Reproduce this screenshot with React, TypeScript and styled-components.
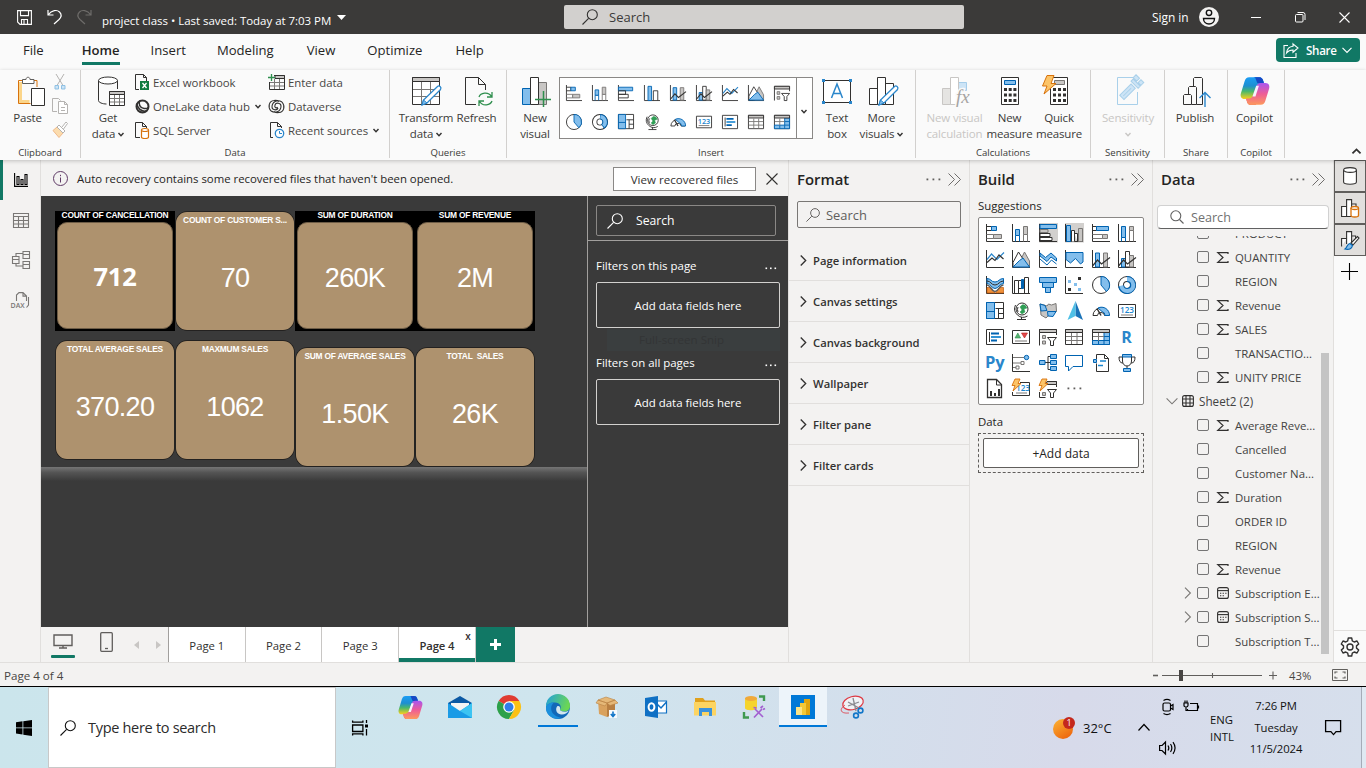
import React from "react";
import styled, { createGlobalStyle, css } from "styled-components";

const INK = "#323130";
const BLUE = "#0063b1";
const SKY = "#83beec";
const GRAY = "#c8c6c4";
const MID = "#797775";
const TEAL = "#117865";
const TAN = "#ae926e";

const Global = createGlobalStyle`
  html, body { margin: 0; padding: 0; width: 1366px; height: 768px; overflow: hidden; }
  body { font-family: "Open Sans", "Noto Sans", sans-serif; font-size: 11.3px; color: #252423; }
  * { box-sizing: border-box; }
  svg { display: block; flex: none; overflow: visible; }
`;

const Screen = styled.div`
  width: 1366px;
  height: 768px;
  display: flex;
  flex-direction: column;
  overflow: hidden;
  white-space: nowrap;
`;

/* ---------- Icon helpers ---------- */

type SvgProps = { w: number; h?: number; box?: string; stroke?: string; sw?: number; children: React.ReactNode };
const Svg = ({ w, h = w, box, stroke = INK, sw = 1, children }: SvgProps) => (
  <svg width={w} height={h} viewBox={box ?? `0 0 ${w} ${h}`} fill="none" stroke={stroke} strokeWidth={sw}>
    {children}
  </svg>
);

const Magnifier = ({ size = 16, color = INK }: { size?: number; color?: string }) => (
  <Svg w={size} box="0 0 16 16" stroke={color} sw={1.1}>
    <circle cx="10.3" cy="5.7" r="5" />
    <path d="M6.6 9.4 .5 15.5" />
  </Svg>
);

const Chevron = ({ dir, size = 10, color = INK, sw = 1.2 }: { dir: "down" | "up" | "right"; size?: number; color?: string; sw?: number }) => (
  <Svg w={size} box="0 0 10 10" stroke={color} sw={sw}>
    <path d={dir === "down" ? "M.5 2.8 5 7.3l4.5-4.5" : dir === "up" ? "M.5 7.2 5 2.7l4.5 4.5" : "M2.5.5 7 5 2.5 9.5"} />
  </Svg>
);

const Caret = ({ color = INK }: { color?: string }) => (
  <Svg w={6} h={5} stroke={color} sw={1.4}>
    <path d="M.5 1 3 3.7 5.5 1" />
  </Svg>
);

const DoubleChevron = () => (
  <Svg w={13} h={13} stroke="#605e5c" sw={0.9}>
    <path d="M.5.5 6.5 6.5.5 12.5M6.5.5 12.5 6.5 6.5 12.5" />
  </Svg>
);

const Dots = ({ color = "#605e5c", gap = 6, size = 1.8 }: { color?: string; gap?: number; size?: number }) => (
  <Svg w={gap * 2 + 3} h={3} stroke="none">
    {[0, 1, 2].map((i) => (
      <rect key={i} x={i * gap + 0.5} y={0.5} width={size} height={size} fill={color} />
    ))}
  </Svg>
);

const axis = <path d="M.5 0v17.5H18" />;
const bolt = <path d="M3-1h5L6 3.5h3L1 11l2-5.5H0z" fill="#fcc468" stroke="#d8720c" strokeWidth=".9" />;

const visuals: Record<string, React.ReactNode> = {
  stackedBar: (<>{axis}<path d="M.5 2.5h5v4h-5" /><path d="M5.5 2.5h5v4h-5z" fill={SKY} stroke={BLUE} /><path d="M.5 10.5h7v4h-7" stroke={MID} /><path d="M7.5 10.5h8v4h-8z" fill={GRAY} stroke={MID} /></>),
  stackedCol: (<>{axis}<path d="M3.5 17.5v-6h4v6" stroke={BLUE} /><path d="M3.5 5.5h4v6h-4z" fill={SKY} stroke={BLUE} /><path d="M11.5 17.5v-7h4v7" stroke={MID} /><path d="M11.5 2.5h4v8h-4z" fill={GRAY} stroke={MID} /></>),
  bar: (<>{axis}<path d="M.5 2.5h16v4H.5z" fill={SKY} stroke={BLUE} /><path d="M.5 6.5h8v4h-8M.5 10.5h11v4H.5" /></>),
  barSel: (<><path d="M0-1h19v19.5H0z" fill="#d2d0ce" stroke="none" />{axis}<path d="M1 .5h16.5v4H1z" fill={SKY} stroke={BLUE} /><path d="M1 5.5h8v3H1z" fill={GRAY} stroke={MID} /><path d="M1 9.5h10v3H1zM1 13.5h12v3H1z" fill="#fff" /></>),
  col: (<>{axis}<path d="M4.5 17.5v-16h4v16z" fill={SKY} stroke={BLUE} /><path d="M10.5 17.5v-11h5v11" /></>),
  colSel: (<><path d="M0-1h19v19.5H0z" fill="#d2d0ce" stroke="none" />{axis}<path d="M1.5 17.5V1.5h4v16z" fill={SKY} stroke={BLUE} /><path d="M6.5 17.5V6.5h3v11M9.5 9.5h3v8" fill="#fff" /><path d="M13.5 17.5v-13h4v13z" fill={GRAY} stroke={MID} /></>),
  fullBar: (<>{axis}<path d="M.5 2.5h4v4h-4" /><path d="M4.5 2.5h12v4h-12z" fill={SKY} stroke={BLUE} /><path d="M.5 10.5h10v4H.5" stroke={MID} /><path d="M10.5 10.5h5v4h-5z" fill={GRAY} stroke={MID} /></>),
  fullCol: (<>{axis}<path d="M3.5 17.5v-4h4v4" stroke={BLUE} /><path d="M3.5 2.5h4v11h-4z" fill={SKY} stroke={BLUE} /><path d="M11.5 17.5v-11h4v11" stroke={MID} /><path d="M11.5 2.5h4v4h-4z" fill={GRAY} stroke={MID} /></>),
  line: (<>{axis}<path d="M1 9.5 5.5 4 11 9.5l7-7" stroke="#2a86cb" strokeWidth="1.2" /><path d="M1 12.5 6 8l3 2.5L13 5l4.5 4" strokeWidth="1.2" /></>),
  area: (<>{axis}<path d="m8 11 4.5-9 5 9v6H8z" fill={GRAY} stroke={MID} /><path d="M1 12.5 6.5 2 11 9l-5 8H1z" fill="#fff" /><path d="m1 17 6.5-6.5L11 8l6.5 9z" fill={SKY} stroke={BLUE} /></>),
  stackArea: (<>{axis}<path d="m1 3 5.5 4.5L12 3l5.5 5v3L12 7l-4 4.5L1 6z" fill={SKY} stroke={BLUE} /><path d="m1 9 7 6 4.5-5 5 4" stroke={BLUE} /></>),
  fullArea: (<>{axis}<path d="M1 2.5h17V12l-2.5 2-5-5.5L5.5 13 1 9.5z" fill={SKY} stroke={BLUE} /></>),
  combo1: (<>{axis}<path d="M3.5 17v-14h4v14z" fill={SKY} stroke={BLUE} /><path d="M11.5 17v-14h4v14z" fill={GRAY} stroke={MID} /><path d="m.5 16 5-6 4 4L18 7.5" strokeWidth="1.2" /></>),
  combo2: (<>{axis}<path d="M3.5 17V8.5h4V17z" fill={SKY} stroke={BLUE} /><path d="M7.5 17V1.5h4V17z" fill="#fff" /><path d="M11.5 17V5.5h4V17z" fill={GRAY} stroke={MID} /><path d="m.5 16 5-6 4 4L18 7.5" strokeWidth="1.2" /></>),
  ribbon: (<>{axis}<path d="M1 11.5h4l4 5.5H1zM17.5 11.5h-4l-4 5.5h8z" fill="#f0913a" stroke="#c05a0b" strokeWidth=".7" /><path d="M1 9c4 0 4 6.5 8 6.5S13 9 17.5 9" strokeWidth="1.5" stroke="#605e5c" /><path d="M1 2.5c4 0 4 3.5 8 3.5s4-3.5 8.5-3.5v5c-4 0-5 5-8.5 5s-4-5-8-5z" fill={SKY} stroke={BLUE} /><path d="M1 5c4 0 4 4 8 4s4-4 8.5-4" /></>),
  waterfall: (<>{axis}<path d="M2.5 17V4.5h4V17M12.5 17V1.5h4V17M6.5 4.5h3v8h-3" /><path d="M9.5 3.5h2v9h-2z" fill={BLUE} stroke={BLUE} /></>),
  funnel: (<g fill={SKY} stroke={BLUE}><path d="M.5 1.5h17v5H.5z" /><path d="M3.5 6.5h11v5h-11z" /><path d="M6.5 11.5h5v5h-5z" /></g>),
  scatter: (<>{axis}<g stroke="none"><path d="M13 1h3v3h-3zM3 12h3v3H3z" fill={INK} /><path d="M3 4h3v3H3zM9 7h3v3H9zM13 12h3v3h-3z" fill={SKY} /></g></>),
  pie: (<><circle cx="9" cy="9" r="8.5" fill="#fff" /><path d="M9 9V.5a8.500 8.500 0 0 1 5.5 15z" fill={SKY} stroke={BLUE} /></>),
  donut: (<><circle cx="9" cy="9" r="6" stroke={INK} strokeWidth="6" /><circle cx="9" cy="9" r="6" stroke="#fff" strokeWidth="4" /><path d="M9 3A6 6 0 1 1 3.1 10" stroke={BLUE} strokeWidth="6" /><path d="M9 3A6 6 0 1 1 3.3 9.8" stroke={SKY} strokeWidth="4" /></>),
  donut2: (<><circle cx="9" cy="9" r="6" stroke={INK} strokeWidth="6" /><circle cx="9" cy="9" r="6" stroke="#fff" strokeWidth="4" /><path d="M9 3a6 6 0 0 1 3 11" stroke={BLUE} strokeWidth="6" /><path d="M9.5 3a6 6 0 0 1 3.2 10.5" stroke={SKY} strokeWidth="4" /></>),
  tree: (<><path d="M.5.5h17v16H.5z" fill="#fff" /><path d="M9.5 6.5h8M12.5 6.5v10M12.5 11.5h5" /><path d="M.5.5h8v16h-8z" fill={SKY} stroke={BLUE} /><path d="M.5 9.5h8" stroke={BLUE} /></>),
  globe: (<><circle cx="10" cy="7" r="6" /><path d="M10 3c3-1 4 1 5 3l-3 1 1 3-3 2-2-2 2-2-2-3z" fill="#2f9e55" stroke="#2f9e55" strokeWidth=".5" /><path d="M6 5a6 6 0 0 0 0 5M3.5 3A8.500 8.500 0 0 0 15.5 14M9.5 15v2.5M5 17.5h9" /></>),
  filled: (<><path d="m1 2 4 1 3 1 1.5-2 3 1L17 1.5l.5 8L14 13l-3-1-4 4-5-3z" fill={GRAY} stroke={MID} /><path d="m1 2 5 1.5 2 5-6 .5z" fill={SKY} stroke={BLUE} /><path d="M8.5 9.5H17l-3 5-5-.5z" fill={SKY} stroke={BLUE} /></>),
  azure: (<g stroke="none"><path d="M10.5-1 18 18l-7.5-4z" fill="#1a73b8" /><path d="M10.5-1 2.5 18l8-4z" fill="#4fc0e6" /></g>),
  gauge: (<><path d="M1 13.5a8 7.500 0 0 1 16 0h-4.500a3.500 3 0 0 0-7 0z" fill="#fff" /><path d="M6 6a8 8 0 0 1 11.5 7.5H13a4 4 0 0 0-3-4z" fill={SKY} stroke={BLUE} /><path d="m5 6.5 4 7" strokeWidth="1.5" /></>),
  card: (<><path d="M.5 2.5h17v13H.5z" fill="#fff" /><path d="M3 13h12" stroke={MID} /><text x="9" y="10.8" fontSize="8.2" fontWeight="600" textAnchor="middle" fill="#1a86d0" stroke="none">123</text></>),
  multi: (<><path d="M.5 1.5h17v15H.5z" fill="#fff" /><path d="M3.5 4v10" /><path d="M5 5.5h8M5 12.5h6" stroke={BLUE} strokeWidth="1.8" /><path d="M5 9h10" stroke="#1a86d0" strokeWidth="1.8" /></>),
  kpi: (<><path d="M.5 2.5h17v13H.5z" fill="#fff" /><path d="M3 13h12" stroke={MID} /><path d="m3 10 2.8-5L8.6 10z" fill="#57b371" stroke="#2f8f4e" strokeWidth=".6" /><path d="m9.5 5 3 5 3-5z" fill="#e04848" stroke="#b52020" strokeWidth=".6" /></>),
  slicer: (<><path d="M.5 17.5V1.5h17V7" /><path d="M.5 1.5h17v3H.5z" fill={GRAY} /><path d="M3.5 7.5h3v3h-3zM3.5 13h3v3h-3z" fill={GRAY} stroke={MID} /><path d="M8.5 9.5h9l-3 3.5v4.5h-3V13z" fill="#fff" /></>),
  table: (<><path d="M.5 1.5h17v15H.5z" fill="#fff" /><path d="M.5 1.5h17v3H.5z" fill={GRAY} /><path d="M1 8.5h16M1 12.5h16M6.5 5v11M12 5v11" stroke={MID} /></>),
  matrix: (<><path d="M.5 1.5h17v15H.5z" fill="#fff" /><path d="M12 4.5h5.5v12H.5v-4H12z" fill={SKY} stroke={BLUE} /><path d="M.5 1.5h17v3H.5z" fill={GRAY} /><path d="M1 8.5h11M6.5 5v8" stroke={MID} /><path d="M12 8.5h5.5M12 12.5h5.5M6.5 13v3.5M12 12.5v4" stroke={BLUE} /></>),
  r: (<text x="8.5" y="14.5" fontSize="16" fontWeight="700" textAnchor="middle" fill="#2a86cb" stroke="none" textLength="9">R</text>),
  py: (<text x="-1" y="14" fontSize="16.5" fontWeight="700" fill="#2a86cb" stroke="none">Py</text>),
  key: (<>{axis}<path d="M1 3.5h11M1 9h8M1 13.5h3" stroke={MID} /><circle cx="14.5" cy="3.5" r="2.2" fill={SKY} stroke={BLUE} /><path d="M9 7.5h3v3H9zM4 12h3v3H4z" fill="#fff" stroke={MID} /></>),
  decomp: (<><path d="M6 8.5h6M9 2.5v13M9 2.5h3M9 15.5h3" /><g fill={SKY} stroke={BLUE}><path d="M.5 6.5H6v4H.5zM11.5.5h6v4h-6zM11.5 6.5h6v4h-6zM11.5 12.5h6v4h-6z" /></g></>),
  qa: (<path d="M.5 1.5h17v11H8l-4.500 4.5v-4.500h-3z" fill="#fff" stroke={BLUE} />),
  narrative: (<><path d="M4.5 5V.5h8l4 4v13h-12V9.5M12.5.5v4h4" fill="#fff" /><path d="M1.5 5.5h3v3h-3z" fill={SKY} stroke={BLUE} /><path d="M8 7h6M6 11.5h5" stroke="#1a86d0" strokeWidth="1.5" /></>),
  trophy: (<><path d="M4.5 3H1c0 4 1 6 4 6M13.5 3H17c0 4-1 6-4 6M9 12v4" /><path d="M4.5 1v6c0 3 2 5 4.5 5s4.500-2 4.500-5V1z" fill="#fff" /><path d="M4.5.5h9v2.5h-9z" fill={SKY} stroke={BLUE} /><path d="M5.5 14.5h7v3h-7z" fill={SKY} stroke={BLUE} /></>),
  paginated: (<><path d="M1.5-.5h9l5 5v13h-14z" fill="#fff" strokeWidth="1.3" /><path d="M10.5 0v5h5" /><path d="M4 11h2v5H4zM8 13h2v3H8zM12 9h2v7h-2z" fill={INK} stroke="none" /></>),
  boltCard: (<><path d="M8 2.5h9.5v13H.5V12" fill="#fff" /><path d="M4 13h11" stroke={MID} /><text x="11" y="11" fontSize="8.2" fontWeight="600" textAnchor="middle" fill="#1a86d0" stroke="none">123</text>{bolt}</>),
  boltSlicer: (<><path d="M8 1.5h9.5V7M.5 12v5.5h6" /><path d="M8 1.5h9.5v3H7z" fill={GRAY} /><path d="M3.5 12.5h3v3h-3z" fill={GRAY} stroke={MID} /><path d="M8.5 9.5h9l-3 3.5v4.5h-3V13z" fill="#fff" />{bolt}</>),
};

const VisualIcon = ({ name, size = 18 }: { name: string; size?: number }) => (
  <Svg w={size} box="0 0 18 18">{visuals[name]}</Svg>
);

const Copilot = ({ size, id }: { size: number; id: string }) => {
  const half = "M8 1h8.500c2.200 0 3 1.200 3.500 3l.8 2.600h-2.600c-2 0-3 .9-3.600 2.900L12 16.500C11.300 18.800 10.200 20 8 20H4C1 20 0 17.500.8 15L4 4.500C4.700 2.200 5.800 1 8 1z";
  return (
    <Svg w={size} box="0 0 26 26" stroke="none">
      <defs>
        <linearGradient id={`${id}a`} x1="0" y1="0" x2="0" y2="1">
          <stop offset="0" stopColor="#1a9df5" />
          <stop offset=".4" stopColor="#1e8fd0" />
          <stop offset=".65" stopColor="#4bb86a" />
          <stop offset="1" stopColor="#fdd01a" />
        </linearGradient>
        <linearGradient id={`${id}b`} x1="0" y1="1" x2="0" y2="0">
          <stop offset="0" stopColor="#a855f0" />
          <stop offset=".5" stopColor="#ee5c96" />
          <stop offset="1" stopColor="#fd9a5c" />
        </linearGradient>
      </defs>
      <path d="M12 1h4.500c2.200 0 3 1.200 3.500 3l.8 3h-8z" fill="#1748c4" />
      <path d="M14 25H9.500c-2.200 0-3-1.200-3.500-3l-.8-3h8z" fill="#f0503c" />
      <path d={half} fill={`url(#${id}a)`} />
      <path d="M13 1h3.500c2.200 0 3 1.200 3.500 3l.8 2.600h-3L15 6z" fill="#1748c4" />
      <g transform="rotate(180 13 13)"><path d={half} fill={`url(#${id}b)`} /></g>
      <path d="m14 8.500-3.200 9.200h2.600L16.400 8.500z" fill="#f6f3fb" />
    </Svg>
  );
};

/* ---------- Title bar ---------- */

const TitleBar = styled.header`
  height: 34px;
  background: #3b3a39;
  color: #fff;
  display: flex;
  align-items: center;
  padding-left: 17px;
`;
const QuickActions = styled.div`
  width: 85px;
  display: flex;
  gap: 15px;
  align-items: center;
`;
const DocTitle = styled.div`
  width: 462px;
  display: flex;
  align-items: center;
  gap: 6px;
  font-size: 11.5px;
  letter-spacing: -0.03px;
  padding-top: 6px;
  svg { margin-top: -5px; }
`;
const GlobalSearch = styled.div`
  width: 400px;
  height: 24px;
  border-radius: 2px;
  background: #d2d0ce;
  color: #3b3a39;
  display: flex;
  align-items: center;
  gap: 11px;
  padding-left: 18px;
  font-size: 13px;
`;
const WindowControls = styled.div`
  margin-left: 188px;
  display: flex;
  align-items: center;
  font-size: 11.9px;
`;
const SignIn = styled.span` width: 47px; `;
const WinButtons = styled.div`
  display: flex;
  gap: 34px;
  margin-left: 32px;
`;

const Title = () => (
  <TitleBar>
    <QuickActions>
      <Svg w={15} stroke="#fff" sw={1.1}><path d="M.6.6h13.800v13.800H3L.6 12zM3.500.6v5h8v-5M4.500 14V9.500h6V14M7 10v4" /></Svg>
      <Svg w={15} h={16} stroke="#fff" sw={1.2}><path d="M1 1v5h5.500M1 6C5 1 10 .5 12.500 3S14.500 8 12 10.500L7 15" /></Svg>
      <Svg w={15} h={16} stroke="#6e6c6a" sw={1.2}><path d="M14 1v5H8.500M14 6C10 1 5 .5 2.500 3S.5 8 3 10.500L8 15" /></Svg>
    </QuickActions>
    <DocTitle>
      project class • Last saved: Today at 7:03 PM
      <Svg w={9} h={5} stroke="none"><path d="M0 0h9L4.500 5z" fill="#fff" /></Svg>
    </DocTitle>
    <GlobalSearch><Magnifier />Search</GlobalSearch>
    <WindowControls>
      <SignIn>Sign in</SignIn>
      <Svg w={20} stroke="#111" sw={1.4}>
        <circle cx="10" cy="10" r="10" fill="#f3f2f1" stroke="none" />
        <circle cx="10" cy="5.800" r="2.700" />
        <path d="M4.500 11.500h11c0 3.500-2.500 5.500-5.500 5.500s-5.500-2-5.500-5.500z" />
      </Svg>
      <WinButtons>
        <Svg w={10} h={11} stroke="#fff"><path d="M0 5.500h10" /></Svg>
        <Svg w={10} h={11} stroke="#fff"><rect x=".5" y="2.500" width="7.500" height="7.500" rx="1" /><path d="M2.500.5H8a2 2 0 0 1 2 2V8" /></Svg>
        <Svg w={11} h={11} stroke="#fff" sw={1.1}><path d="m.5.5 10 10M10.500.5l-10 10" /></Svg>
      </WinButtons>
    </WindowControls>
  </TitleBar>
);

/* ---------- Menu tabs ---------- */

const MenuBar = styled.nav`
  height: 36px;
  background: #fafafa;
  display: flex;
  padding: 0 6px 0 23px;
  font-size: 13.1px;
`;
const MenuTab = styled.span<{ $gap?: number; $active?: boolean }>`
  height: 31px;
  line-height: 32px;
  margin-right: ${(p) => p.$gap ?? 32}px;
  ${(p) => p.$active && css`font-weight: 600; box-shadow: inset 0 -3px 0 ${TEAL};`}
`;
const ShareButton = styled.button`
  margin: 4px 0 0 auto;
  width: 84px;
  height: 24px;
  border: 0;
  border-radius: 4px;
  background: ${TEAL};
  color: #fff;
  font: 600 11.6px "Open Sans", sans-serif;
  display: flex;
  align-items: center;
  padding: 0 7px;
  gap: 7px;
  span { width: 29px; letter-spacing: -0.3px; }
`;

const Menu = () => (
  <MenuBar>
    <MenuTab $gap={38}>File</MenuTab>
    <MenuTab $gap={31} $active>Home</MenuTab>
    <MenuTab $gap={31}>Insert</MenuTab>
    <MenuTab $gap={33}>Modeling</MenuTab>
    <MenuTab>View</MenuTab>
    <MenuTab $gap={33}>Optimize</MenuTab>
    <MenuTab>Help</MenuTab>
    <ShareButton>
      <Svg w={16} h={15} stroke="#fff" sw={1.1}><path d="M5 2.500H1v12h12V10M10 .8l5 4.200-5 4.200V7C7 7 5 8 3.500 10 4 6 6.500 3.500 10 3.200z" /></Svg>
      <span>Share</span>
      <Chevron dir="down" color="#fff" />
    </ShareButton>
  </MenuBar>
);

/* ---------- Ribbon ---------- */

const Ribbon = styled.section`
  height: 90px;
  background: #fafafa;
  display: flex;
  position: relative;
  z-index: 1;
  box-shadow: 0 1px 4px rgba(0, 0, 0, 0.22);
`;
const GroupBox = styled.div<{ $w: number }>`
  width: ${(p) => p.$w}px;
  height: 88px;
  border-right: 1px solid #d2d0ce;
  display: flex;
  flex-direction: column;
`;
const GroupBody = styled.div<{ $pad?: number }>`
  height: 76px;
  flex: none;
  display: flex;
  padding-left: ${(p) => p.$pad ?? 0}px;
`;
const GroupName = styled.div`
  flex: none;
  text-align: center;
  font-size: 9.6px;
  line-height: 14px;
  color: #3b3a39;
`;
const BigButton = styled.div<{ $w: number; $off?: boolean }>`
  width: ${(p) => p.$w}px;
  flex: none;
  display: flex;
  flex-direction: column;
  align-items: center;
  line-height: 16px;
  font-size: 11.5px;
  letter-spacing: -0.15px;
  color: ${(p) => (p.$off ? "#c8c6c4" : "#3b3a39")};
`;
const BigIcon = styled.div<{ $shift: number }>`
  height: 40px;
  padding-top: 6px;
  transform: translateX(${(p) => p.$shift}px);
`;
const Line = styled.span`
  display: flex;
  align-items: center;
  gap: 3px;
  min-height: 16px;
`;
const SmallStack = styled.div`
  display: flex;
  flex-direction: column;
  align-items: center;
  gap: 8px;
  padding-top: 4px;
`;
const CommandList = styled.div<{ $w: number }>`
  width: ${(p) => p.$w}px;
  display: flex;
  flex-direction: column;
`;
const Command = styled.div`
  height: 24px;
  flex: none;
  display: flex;
  align-items: center;
  gap: 3px;
  font-size: 11.4px;
  letter-spacing: -0.03px;
  color: #484644;
  svg:last-of-type:not(:first-child) { margin-left: 2px; }
`;
const Gallery = styled.div`
  margin-top: 7px;
  width: 254px;
  height: 62px;
  flex: none;
  border: 1px solid #8a8886;
  background: #fff;
  display: flex;
`;
const GalleryGrid = styled.div`
  width: 237px;
  border-right: 1px solid #8a8886;
  display: grid;
  grid-template-columns: repeat(9, 26px);
  grid-template-rows: 29px 29px;
  align-items: center;
  padding-left: 6px;
`;
const GalleryMore = styled.div`
  flex: 1;
  display: flex;
  align-items: center;
  justify-content: center;
  padding: 6px 2px 0 0;
`;
const CollapseRibbon = styled.div`
  margin: 77px 0 0 67px;
`;

type GroupProps = { w: number; name: string; pad?: number; children: React.ReactNode };
const Group = ({ w, name, pad, children }: GroupProps) => (
  <GroupBox $w={w}>
    <GroupBody $pad={pad}>{children}</GroupBody>
    <GroupName>{name}</GroupName>
  </GroupBox>
);

type BigProps = { w: number; icon: React.ReactNode; lines: string[]; caret?: boolean; off?: boolean; shift?: number };
const Big = ({ w, icon, lines, caret, off, shift = 0 }: BigProps) => (
  <BigButton $w={w} $off={off}>
    <BigIcon $shift={shift}>{icon}</BigIcon>
    {lines.map((text, i) => (
      <Line key={i}>
        {text}
        {caret && i === lines.length - 1 && <Caret color={off ? "#c8c6c4" : INK} />}
      </Line>
    ))}
  </BigButton>
);

const pencil = (
  <>
    <path d="M26.500 10.500c1.500-1.500 4.500.5 3 3L16 27l-5 2 1.500-5z" fill="#fff" stroke="#2a86cb" strokeWidth="1.3" />
    <path d="m12.500 24-1.500 5 5-2z" fill={SKY} stroke="#2a86cb" />
  </>
);
const bars3 = "M1.500 28.500v-16h8v16zM9.500 28.500V1.500h8v27zM17.500 28.500v-21h8v21z";

const icons = {
  paste: <Svg w={28} h={30}><path d="M8 4.500H1.500v23h12" stroke="#d8720c" /><path d="M3.500 6v19.500h9" stroke="#fbd58a" strokeWidth="3" /><path d="M20 11V4.500h-5" stroke="#d8720c" /><path d="M5.500 7.500v-4H9c0-3 4-3 4 0h4v4z" fill="#fff" stroke="#605e5c" /><path d="M14.500 12.500h13v17h-13z" fill="#fff" /></Svg>,
  cut: <Svg w={12} h={16} stroke="#b5b3b1"><path d="M2 0 9 11.500M10 0 3 11.500" /><path d="M1 11.500h3.500v3.500H1zM7.500 11.500H11v3.500H7.500z" fill="#cde4f6" stroke="#8fc1e4" /></Svg>,
  copy: <Svg w={16} h={16} stroke="#b5b3b1"><path d="M5 13.500H.5v-13h6l2 2" /><path d="M6.500 3.500h6l3 3v9h-9zM12.500 3.500v3h3M9 9.500h4M9 12.500h4" fill="#fff" /></Svg>,
  painter: <Svg w={16} h={16} stroke="#b5b3b1"><path d="m1 8.500 4-3.500 6 6-4 4.500z" fill="#fbdcae" stroke="#f0b98a" /><path d="m5 5 2-2 6 6-2 2zM10 5l4-5 1.500 1.500L11.500 7" fill="#fff" /></Svg>,
  getData: <Svg w={28} h={30}><path d="M1.500 4.500v20c0 2 4 3.500 8 3.500M20.500 4.500V13" /><ellipse cx="11" cy="4.500" rx="9.500" ry="3.500" fill="#fff" /><path d="M12.500 15.500h15v14h-15z" fill="#fff" /><path d="M12.500 15.500h15v3h-15z" fill={GRAY} /><path d="M13 22.500h14M13 26h14M17.500 19v10M22.500 19v10" stroke={MID} /></Svg>,
  transform: <Svg w={32} h={32}><path d="M1.500 1.500h27v27h-27z" fill="#fff" /><path d="M1.500 1.500h27v4h-27z" fill={GRAY} /><path d="M2 13.500h26M2 20.500h26M10.500 6v22M19.500 6v22" stroke={MID} />{pencil}</Svg>,
  refresh: <Svg w={32} h={32}><path d="M13 28.500H2.500v-27h13l7 7V14M15.500 1.500v7h7" /><path d="M16 21c1.500-4 9-6 12.500-.5M29 16v5h-5M29 25c-1.500 4-9 6-12.500.5M16 30v-5h5" stroke="#2f8f4e" strokeWidth="1.300" /></Svg>,
  newVisual: <Svg w={30} h={32}><path d="M1.500 12.500h8v16h-8z" fill={SKY} stroke={BLUE} /><path d="M17.500 6.500h8v22h-8z" fill={GRAY} stroke={MID} /><path d="M9.500 1.500h8v27h-8z" fill="#fff" /><path d="M14 23.500h16M22.500 15v16" stroke="#2f8f4e" strokeWidth="1.500" /></Svg>,
  textBox: <Svg w={32} h={32}><path d="M2.500 4.500h27v22h-27z" fill="#fff" /><path d="M1 3h3v3H1zM28 3h3v3h-3zM1 25h3v3H1zM28 25h3v3h-3z" fill="#2a86cb" stroke="none" /><path d="m10.500 22 5.500-14 5.500 14M12.500 17.500h7" stroke="#2a86cb" strokeWidth="1.500" /></Svg>,
  more: <Svg w={32} h={32}><path d={bars3} fill="#fff" />{pencil}</Svg>,
  calc: <Svg w={30} h={32} stroke="#c8c6c4"><path d="M1.500 12.500h8v16h-8z" fill="#e5e4e2" /><path d="M17.500 6.500h8v8h-8z" fill="#cde4f6" stroke="#a5cdea" /><path d="M9.500 1.500h8v27h-8z" fill="#fff" /><text x="15" y="27" fontSize="19" fontStyle="italic" fontFamily="Liberation Serif, serif" fill="#a6a4a2" stroke="#fafafa" strokeWidth="3" paintOrder="stroke">fx</text></Svg>,
  measure: <Svg w={22} h={32}><path d="M2.500 1.500h17v27h-17z" fill="#fff" /><path d="M5.500 4.500h11v4h-11z" fill={SKY} stroke={BLUE} /><path d="M5 13.500h13M5 19h13M5 24.500h13" strokeWidth="3" strokeDasharray="3 1.700" /></Svg>,
  quick: <Svg w={32} h={32}><path d="M9.500 1.500h17v27h-17z" fill="#fff" /><path d="M13.500 4.500h10v4h-10z" fill={GRAY} stroke={MID} /><path d="M12 13.500h13M12 19h13M12 24.500h13" strokeWidth="3" strokeDasharray="3 2" /><path d="M6-.5h7L10 7.500h5L3 18l3-8H1.500z" fill="#fcc468" stroke="#d8720c" /></Svg>,
  sensitivity: <Svg w={30} h={32} stroke="#a9d0ea"><path d="M18 1.500H2.500v27h20V16" /><g transform="rotate(-45 15 14)"><path d="M4 10.500h16v6H4z" fill="#cde4f6" /><path d="M6 13.500h11" /><path d="M22 8.500h3v10h-3zM26 7.500h4v5h-4zM26 14.500h4v4h-4z" fill="#cde4f6" /></g></Svg>,
  publish: <Svg w={30} h={32}><path d="M11.500 10V2.500l1-1h7l1 1v26h-6" fill="#fafafa" /><path d="M6.500 18v-6.500l1-1h6l1 1v17h-5" fill="#fafafa" /><path d="M1.500 28.500v-9l1-1h6l1 1v9z" fill="#fafafa" /><path d="M23 31V17M17.500 22 23 16.500l5.500 5.500" stroke="#2a86cb" strokeWidth="1.400" /></Svg>,
  excel: <Svg w={15} h={17}><path d="M4 15.500H.5V.5h8l3 3V7M8.500.5v3h3" /><path d="M5 7h9v9H5z" fill="#107c41" stroke="none" /><path d="m7.500 9 4 5M11.500 9l-4 5" stroke="#fff" strokeWidth="1.300" /></Svg>,
  oneLake: <Svg w={15} h={15} sw={2}><circle cx="7.500" cy="7.500" r="6" /><path d="M5 1.500C3 5 5 9 9 9.500c2 .3 4-.5 4.500-1.500M2 4.500c0 4 4 8.500 9 7.500" strokeWidth="1.500" /></Svg>,
  sql: <Svg w={15} h={17}><path d="M5 15.500H.5V.5h7l4 4V6M7.500.5v4h4" /><path d="M6.500 8v7c0 2 7 2 7 0V8" fill="#fff" stroke="#d8720c" strokeWidth="1.200" /><ellipse cx="10" cy="8" rx="3.500" ry="1.500" fill="#fff" stroke="#d8720c" strokeWidth="1.200" /></Svg>,
  enter: <Svg w={17} h={17}><path d="M6 1.500h10.500v14H1.500V8" /><path d="M7 1.500h9.500v3H7z" fill={GRAY} /><path d="M2 8.500h14M2 12h14M6.500 5v10M11.500 5v10" stroke={MID} /><path d="M0 3.500h7M3.500 0v7" stroke="#2f8f4e" strokeWidth="1.300" /></Svg>,
  dataverse: <Svg w={17} h={15} sw={1.1}><path d="M3 12C-.5 8 1 2 6 1.500c3-.5 5 1 5 1M14 3c3.500 4 2 10-3 10.500-3 .5-5-1-5-1M3 12c5 3 10 0 10-5 0-3-5-4-6-1s2 3.500 2.500 2M14 3C9 0 4 3 4 8c0 3 5 4 6 1" /></Svg>,
  recent: <Svg w={17} h={17}><path d="M5 15.500H2.500V.5h7l4 4V6M9.500.5v4h4" /><circle cx="11.500" cy="11.500" r="4.200" fill="#fff" stroke="#2a86cb" strokeWidth="1.300" /><path d="M11.500 9v2.500h2.500" stroke="#2a86cb" /></Svg>,
};

const galleryNames = [
  "stackedBar", "stackedCol", "bar", "col", "combo1", "combo2", "line", "area", "slicer",
  "pie", "donut2", "tree", "globe", "gauge", "card", "multi", "table", "matrix",
];

const RibbonArea = () => (
  <Ribbon>
    <Group w={81} name="Clipboard" pad={3}>
      <Big w={49} icon={icons.paste} lines={["Paste"]} shift={3} />
      <SmallStack>{icons.cut}{icons.copy}{icons.painter}</SmallStack>
    </Group>
    <Group w={309} name="Data">
      <Big w={54} icon={icons.getData} lines={["Get", "data"]} caret shift={3} />
      <CommandList $w={133}>
        <Command>{icons.excel}Excel workbook</Command>
        <Command>{icons.oneLake}OneLake data hub<Caret /></Command>
        <Command>{icons.sql}SQL Server</Command>
      </CommandList>
      <CommandList $w={120}>
        <Command>{icons.enter}Enter data</Command>
        <Command>{icons.dataverse}Dataverse</Command>
        <Command>{icons.recent}Recent sources<Caret /></Command>
      </CommandList>
    </Group>
    <Group w={117} name="Queries" pad={8}>
      <Big w={56} icon={icons.transform} lines={["Transform", "data"]} caret shift={1} />
      <Big w={45} icon={icons.refresh} lines={["Refresh"]} shift={2} />
    </Group>
    <Group w={409} name="Insert" pad={4}>
      <Big w={48} icon={icons.newVisual} lines={["New", "visual"]} shift={1} />
      <Gallery>
        <GalleryGrid>{galleryNames.map((n) => <VisualIcon key={n} name={n} size={16} />)}</GalleryGrid>
        <GalleryMore><Caret /></GalleryMore>
      </Gallery>
      <Big w={48} icon={icons.textBox} lines={["Text", "box"]} />
      <Big w={41} icon={icons.more} lines={["More", "visuals"]} caret shift={2} />
    </Group>
    <Group w={175} name="Calculations" pad={8}>
      <Big w={61} icon={icons.calc} lines={["New visual", "calculation"]} off shift={1} />
      <Big w={49} icon={icons.measure} lines={["New", "measure"]} />
      <Big w={50} icon={icons.quick} lines={["Quick", "measure"]} shift={-2} />
    </Group>
    <Group w={74} name="Sensitivity">
      <Big w={74} icon={icons.sensitivity} lines={["Sensitivity", ""]} caret off shift={2} />
    </Group>
    <Group w={63} name="Share">
      <Big w={60} icon={icons.publish} lines={["Publish"]} shift={2} />
    </Group>
    <Group w={57} name="Copilot">
      <Big w={53} icon={<Copilot size={30} id="rc" />} lines={["Copilot"]} />
    </Group>
    <CollapseRibbon><Chevron dir="up" size={9} sw={2} /></CollapseRibbon>
  </Ribbon>
);

/* ---------- Workspace ---------- */

const Workspace = styled.main`
  height: 502px;
  display: flex;
  background: #f3f2f1;
`;
const ViewRail = styled.aside`
  width: 41px;
  border-right: 1px solid #e1dfdd;
  display: flex;
  flex-direction: column;
`;
const RailItem = styled.div<{ $active?: boolean }>`
  height: 40px;
  display: flex;
  align-items: center;
  justify-content: center;
  padding-left: 1px;
  ${(p) => p.$active && css`box-shadow: inset 3px 0 0 ${TEAL};`}
`;
const Center = styled.div`
  width: 747px;
  display: flex;
  flex-direction: column;
`;
const Notice = styled.div`
  height: 36px;
  display: flex;
  align-items: center;
  padding: 1px 10px 0 12px;
  font-size: 11.37px;
`;
const NoticeText = styled.span`
  width: 536px;
  margin-left: 9px;
`;
const NoticeButton = styled.button`
  width: 143px;
  height: 24px;
  border: 1px solid #8a8886;
  background: #fff;
  font: 500 11.6px "Open Sans", sans-serif;
  color: ${INK};
  margin-right: 10px;
  padding-top: 3px;
`;
const Stage = styled.div`
  height: 431px;
  display: flex;
  background: #3a3a3a;
`;
const CanvasArea = styled.div`
  width: 546px;
  display: flex;
  flex-direction: column;
`;
const ReportPage = styled.div`
  height: 271px;
  padding: 15px 0 0 14px;
  display: grid;
  grid-template-columns: repeat(4, 120px);
  grid-template-rows: 120px 120px;
  row-gap: 9px;
`;
const PageShadow = styled.div`
  height: 14px;
  background: linear-gradient(#757575, #545454 40%, #3a3a3a);
`;
const KpiFrame = styled.div<{ $drop?: boolean }>`
  width: 120px;
  height: 120px;
  padding: 1px 0 0 1px;
  ${(p) => p.$drop && css`margin-top: 7px;`}
`;
const KpiTitle = styled.div`
  font: 700 8.4px/9px "Liberation Sans", sans-serif;
  letter-spacing: -0.22px;
  color: #fff;
  text-align: center;
  white-space: pre;
`;
const KpiTile = styled.div`
  width: 118px;
  height: 118px;
  border-radius: 11px;
  background: ${TAN};
  box-shadow: 0 0 0 0.7px #1c1a18;
  padding-top: 4px;
`;
const KpiValue = styled.div<{ $bold?: boolean; $top: number }>`
  font-family: ${(p) => (p.$bold ? '"Open Sans"' : '"Liberation Sans"')}, sans-serif;
  font-weight: ${(p) => (p.$bold ? 700 : 400)};
  font-size: ${(p) => (p.$bold ? 25.5 : 27)}px;
  line-height: 30px;
  letter-spacing: ${(p) => (p.$bold ? -0.3 : -0.65)}px;
  color: #fff;
  text-align: center;
  padding-top: ${(p) => p.$top}px;
`;
const BlackFrame = styled.div`
  width: 120px;
  height: 120px;
  background: #000;
`;
const InsetTile = styled.div`
  width: 116px;
  height: 107px;
  margin: 2px 0 0 2px;
  border-radius: 10px;
  border: 1px solid #6d5c46;
  background: ${TAN};
`;

const Framed = ({ title, value, bold }: { title: string; value: string; bold?: boolean }) => (
  <BlackFrame>
    <KpiTitle>{title}</KpiTitle>
    <InsetTile><KpiValue $top={bold ? 38 : 40} $bold={bold}>{value}</KpiValue></InsetTile>
  </BlackFrame>
);
const Tile = ({ title, value, drop }: { title: string; value: string; drop?: boolean }) => (
  <KpiFrame $drop={drop}>
    <KpiTile><KpiTitle>{title}</KpiTitle><KpiValue $top={38}>{value}</KpiValue></KpiTile>
  </KpiFrame>
);

const FilterPane = styled.aside`
  width: 201px;
  border-left: 1px solid #a19f9d;
  color: #fff;
`;
const FilterSearchRow = styled.div`
  height: 45px;
  border-bottom: 1px solid #a19f9d;
  padding: 9px 0 0 8px;
`;
const FilterSearch = styled.div`
  width: 180px;
  height: 31px;
  border: 1px solid #8a8886;
  border-radius: 2px;
  display: flex;
  align-items: center;
  gap: 13px;
  padding-left: 10px;
  font-size: 12.2px;
`;
const FilterSection = styled.div<{ $top: number }>`
  padding: ${(p) => p.$top}px 8px 0 8px;
  font-size: 11.45px;
`;
const FilterHead = styled.div`
  height: 16px;
  line-height: 16px;
  display: flex;
  justify-content: space-between;
  svg { margin: 9px 3px 0 0; }
`;
const DropZone = styled.div`
  width: 184px;
  height: 46px;
  margin-top: 8px;
  border: 1px solid #d2d0ce;
  border-radius: 2px;
  display: flex;
  align-items: center;
  justify-content: center;
`;
const FadedHint = styled.div`
  margin: 1px 0 0 19px;
  width: 173px;
  height: 22px;
  line-height: 22px;
  padding-left: 32px;
  background: #3a3e3f;
  color: #333536;
  font-size: 11.6px;
`;

const PageBar = styled.div`
  height: 35px;
  display: flex;
`;
const LayoutButtons = styled.div`
  width: 128px;
  border-right: 1px solid #a19f9d;
  display: flex;
  align-items: center;
  padding-left: 10px;
`;
const DesktopLayout = styled.div`
  width: 24px;
  height: 35px;
  padding: 7px 0 0 2px;
`;
const DesktopMark = styled.div`
  width: 24px;
  height: 3px;
  border-radius: 1px;
  background: ${TEAL};
  margin: 6px 0 0 -2px;
`;
const PhoneLayout = styled.div` margin: -5px 21px 0 25px; `;
const PageArrows = styled.div`
  display: flex;
  gap: 17px;
`;
const PageTab = styled.div<{ $active?: boolean }>`
  width: 76.7px;
  height: 35px;
  padding-top: 1px;
  background: #fff;
  border-right: 1px solid #c8c6c4;
  display: flex;
  align-items: center;
  justify-content: center;
  font-size: 11.3px;
  color: ${INK};
  position: relative;
  ${(p) => p.$active && css`
    font-weight: 600;
    letter-spacing: -0.1px;
    box-shadow: inset 0 -4px 0 ${TEAL};
  `}
`;
const TabClose = styled.span`
  position: absolute;
  top: 2px;
  right: 4px;
  font-size: 10px;
`;
const AddPage = styled.div`
  width: 39px;
  background: ${TEAL};
  display: flex;
  align-items: center;
  justify-content: center;
`;

const CenterColumn = () => (
  <Center>
    <Notice>
      <Svg w={15} stroke="#5f3a66"><circle cx="7.500" cy="7.500" r="7" /><path d="M7.500 6.500v5M7.500 3.800v1.400" /></Svg>
      <NoticeText>Auto recovery contains some recovered files that haven't been opened.</NoticeText>
      <NoticeButton>View recovered files</NoticeButton>
      <Svg w={12} sw={1.1}><path d="m.5.5 11 11M11.500.5l-11 11" /></Svg>
    </Notice>
    <Stage>
      <CanvasArea>
        <ReportPage>
          <Framed title="COUNT OF CANCELLATION" value="712" bold />
          <Tile title="COUNT OF CUSTOMER S..." value="70" />
          <Framed title="SUM OF DURATION" value="260K" />
          <Framed title="SUM OF REVENUE" value="2M" />
          <Tile title="TOTAL AVERAGE SALES" value="370.20" />
          <Tile title="MAXMUM SALES" value="1062" />
          <Tile title="SUM OF AVERAGE SALES" value="1.50K" drop />
          <Tile title={"TOTAL  SALES"} value="26K" drop />
        </ReportPage>
        <PageShadow />
      </CanvasArea>
      <FilterPane>
        <FilterSearchRow><FilterSearch><Magnifier color="#fff" />Search</FilterSearch></FilterSearchRow>
        <FilterSection $top={17}>
          <FilterHead>Filters on this page<Dots color="#fff" gap={4.5} size={1.6} /></FilterHead>
          <DropZone>Add data fields here</DropZone>
        </FilterSection>
        <FadedHint>Full-screen Snip</FadedHint>
        <FilterSection $top={4}>
          <FilterHead>Filters on all pages<Dots color="#fff" gap={4.5} size={1.6} /></FilterHead>
          <DropZone>Add data fields here</DropZone>
        </FilterSection>
      </FilterPane>
    </Stage>
    <PageBar>
      <LayoutButtons>
        <DesktopLayout>
          <Svg w={20} h={15} stroke="#605e5c" sw={1.4}><path d="M1 1h18v10.500H1zM10 11.500v2M6 14h8" /></Svg>
          <DesktopMark />
        </DesktopLayout>
        <PhoneLayout><Svg w={13} h={20} stroke="#605e5c" sw={1.3}><rect x=".7" y=".7" width="11.600" height="18.600" rx="1" /><path d="M5 16.500h3" /></Svg></PhoneLayout>
        <PageArrows>
          <Svg w={5} h={8} stroke="none"><path d="M5 0v8L0 4z" fill="#c8c6c4" /></Svg>
          <Svg w={5} h={8} stroke="none"><path d="M0 0v8l5-4z" fill="#c8c6c4" /></Svg>
        </PageArrows>
      </LayoutButtons>
      <PageTab>Page 1</PageTab>
      <PageTab>Page 2</PageTab>
      <PageTab>Page 3</PageTab>
      <PageTab $active>Page 4<TabClose>x</TabClose></PageTab>
      <AddPage><Svg w={11} stroke="#fff" sw={3}><path d="M0 5.500h11M5.500 0v11" /></Svg></AddPage>
    </PageBar>
  </Center>
);

/* ---------- Side panes ---------- */

const Pane = styled.section<{ $w: number }>`
  width: ${(p) => p.$w}px;
  border-left: 1px solid #e1dfdd;
  display: flex;
  flex-direction: column;
  overflow: hidden;
`;
const PaneHead = styled.div`
  height: 38px;
  flex: none;
  padding: 0 8px;
  display: flex;
  align-items: center;
  font-size: 14.9px;
  font-weight: 600;
  gap: 7px;
  span { flex: 1; }
`;
const Head = ({ name }: { name: string }) => (
  <PaneHead><span>{name}</span><Dots /><DoubleChevron /></PaneHead>
);
const FormatSearch = styled.div`
  margin: 3px 8px 12px;
  width: 164px;
  height: 27px;
  border: 1px solid #797775;
  border-radius: 2px;
  display: flex;
  align-items: center;
  gap: 6px;
  padding-left: 8px;
  font-size: 12.9px;
  color: #605e5c;
`;
const FormatRow = styled.div`
  height: 41px;
  border-bottom: 1px solid #e1dfdd;
  display: flex;
  align-items: center;
  gap: 4px;
  padding-left: 9px;
  font-weight: 600;
  font-size: 11.25px;
  color: #323130;
`;
const SectionLabel = styled.div<{ $h: number; $top?: number }>`
  height: ${(p) => p.$h}px;
  padding: ${(p) => p.$top ?? 0}px 0 0 8px;
  font-size: 11.4px;
  line-height: 16px;
`;
const VisualBox = styled.div`
  margin-left: 8px;
  width: 166px;
  height: 188px;
  border: 1px solid #8a8886;
  border-radius: 2px;
  background: #fff;
  padding: 6px 0 0 7px;
  display: grid;
  grid-template-columns: repeat(6, 26.4px);
  grid-auto-rows: 26px;
`;
const MoreCell = styled.div` padding: 7px 0 0 2px; `;
const AddZone = styled.div`
  margin-left: 8px;
  width: 166px;
  height: 40px;
  border: 1px dashed #605e5c;
  padding: 4px;
`;
const AddButton = styled.div`
  height: 30px;
  border: 1px solid #605e5c;
  border-radius: 2px;
  background: #fff;
  display: flex;
  align-items: center;
  justify-content: center;
  font-weight: 500;
  font-size: 12px;
  padding-top: 1px;
`;
const buildNames = [
  "stackedBar", "stackedCol", "barSel", "colSel", "fullBar", "fullCol",
  "line", "area", "stackArea", "fullArea", "combo1", "combo2",
  "ribbon", "waterfall", "funnel", "scatter", "pie", "donut",
  "tree", "globe", "filled", "azure", "gauge", "card",
  "multi", "kpi", "slicer", "table", "matrix", "r",
  "py", "key", "decomp", "qa", "narrative", "trophy",
  "paginated", "boltCard", "boltSlicer",
];

const DataSearch = styled.div`
  margin: 7px 0 7px 4px;
  width: 172px;
  height: 24px;
  flex: none;
  border: 1px solid #d1d1d1;
  border-bottom-color: #616161;
  border-radius: 4px;
  background: #fff;
  display: flex;
  align-items: center;
  gap: 7px;
  padding-left: 12px;
  font-size: 12.6px;
  color: #707070;
`;
const TreeArea = styled.div`
  flex: 1;
  display: flex;
  overflow: hidden;
`;
const TreeRows = styled.div`
  width: 168px;
  margin-top: -15px;
`;
const TreeRow = styled.div`
  height: 24px;
  display: grid;
  grid-template-columns: 15px 20px 18px 86px;
  align-items: center;
  padding-left: 29px;
  font-size: 11.4px;
  color: #424242;
`;
const TableRow = styled.div`
  height: 24px;
  display: flex;
  align-items: center;
  gap: 4px;
  padding-left: 13px;
  font-size: 11.7px;
  color: #424242;
  span { margin-left: 1px; }
`;
const CheckBox = styled.i`
  width: 12px;
  height: 12px;
  border: 1px solid #757575;
  border-radius: 2px;
`;
const ScrollThumb = styled.div`
  width: 8px;
  height: 301px;
  margin-top: 117px;
  background: #c4c4c4;
`;

type Kind = "sum" | "date" | "";
type Field = [string, Kind];
const sheetOne: Field[] = [
  ["PRODUCT", ""], ["QUANTITY", "sum"], ["REGION", ""], ["Revenue", "sum"],
  ["SALES", "sum"], ["TRANSACTIO...", ""], ["UNITY PRICE", "sum"],
];
const sheetTwo: Field[] = [
  ["Average Reve...", "sum"], ["Cancelled", ""], ["Customer Na...", ""], ["Duration", "sum"],
  ["ORDER ID", ""], ["REGION", ""], ["Revenue", "sum"], ["Subscription E...", "date"],
  ["Subscription S...", "date"], ["Subscription T...", ""],
];

const FieldRow = ({ field: [name, kind] }: { field: Field }) => (
  <TreeRow>
    {kind === "date" ? <Chevron dir="right" size={12} color={MID} sw={0.9} /> : <b />}
    <CheckBox />
    {kind === "sum" ? (
      <Svg w={12} h={11} sw={1.2}><path d="M11 2V.6H.8L6 5.500.8 10.400H11V9" /></Svg>
    ) : kind === "date" ? (
      <Svg w={12} h={12} sw={1.1}><rect x=".6" y=".6" width="10.800" height="10.800" rx="2" /><path d="M.6 3.600h10.800" /><path d="M3 6.200h6.500M3 8.700h4.500" strokeDasharray="1.300 1.300" /></Svg>
    ) : <b />}
    <span>{name}</span>
  </TreeRow>
);

const SwitchRail = styled.aside`
  width: 33px;
  border-left: 1px solid #e1dfdd;
  background: #fafafa;
  display: flex;
  flex-direction: column;
  align-items: center;
`;
const SwitchItem = styled.div`
  width: 32px;
  height: 32px;
  border: 1px solid #605e5c;
  background: #e1dfdd;
  display: flex;
  align-items: center;
  justify-content: center;
`;
const AddPane = styled.div` margin: 7px 2px 0 0; `;
const Settings = styled.div`
  margin-top: auto;
  width: 32px;
  height: 32px;
  border-top: 1px solid #e1dfdd;
  display: flex;
  align-items: center;
  justify-content: center;
`;

const Work = () => (
  <Workspace>
    <ViewRail>
      <RailItem $active><Svg w={14} stroke="#000" sw={1.1}><path d="M.6 0v13.400H14M3 11.500v-8h2v8zM7 11.500v-5h2v5zM11 11.500V1.500h2v10z" /></Svg></RailItem>
      <RailItem><Svg w={16} h={15} stroke="#797775" sw={1.1}><path d="M.5.5h15v14H.5zM.5 3.500h15M.5 7.500h15M.5 11h15M5.500 3.500v11M10.500 3.500v11" /></Svg></RailItem>
      <RailItem><Svg w={18} stroke="#797775" sw={1.1}><path d="M.5 5.500H7v7H.5zM.5 8.500H7M11 .5h6.500v7H11zM11 3.500h6.500M11 10.500h6.500v7H11zM11 13.500h6.500M4 5V2.500h7M4 12.500v2.500h7" /></Svg></RailItem>
      <RailItem>
        <Svg w={20} h={17} stroke="#797775" sw={1.1}>
          <path d="M5.500 9V3L8 .6h4l3.500 3.500V9M12 .6v3.500h3.500M17.500 5v8l-2 2.500" />
          <text x="-.5" y="15.500" fontSize="7" fontWeight="600" fill="#797775" stroke="none">DAX</text>
        </Svg>
      </RailItem>
    </ViewRail>
    <CenterColumn />
    <Pane $w={181}>
      <Head name="Format" />
      <FormatSearch><Magnifier size={14} color="#605e5c" />Search</FormatSearch>
      {["Page information", "Canvas settings", "Canvas background", "Wallpaper", "Filter pane", "Filter cards"].map((n) => (
        <FormatRow key={n}><Chevron dir="right" size={11} />{n}</FormatRow>
      ))}
    </Pane>
    <Pane $w={183}>
      <Head name="Build" />
      <SectionLabel $h={19}>Suggestions</SectionLabel>
      <VisualBox>
        {buildNames.map((n) => <VisualIcon key={n} name={n} />)}
        <MoreCell><Dots /></MoreCell>
      </VisualBox>
      <SectionLabel $h={28} $top={9}>Data</SectionLabel>
      <AddZone><AddButton>+Add data</AddButton></AddZone>
    </Pane>
    <Pane $w={181}>
      <Head name="Data" />
      <DataSearch><Svg w={14} stroke="#616161" sw={1.1}><circle cx="5.800" cy="5.800" r="5" /><path d="m9.500 9.500 4 4" /></Svg>Search</DataSearch>
      <TreeArea>
        <TreeRows>
          {sheetOne.map((f) => <FieldRow key={f[0]} field={f} />)}
          <TableRow>
            <Chevron dir="down" size={12} color={MID} sw={0.9} />
            <Svg w={12} sw={1.1}><rect x=".6" y=".6" width="10.800" height="10.800" rx="2" /><path d="M.6 4h10.800M.6 8h10.800M4 .6v10.800M8 .6v10.800" /></Svg>
            <span>Sheet2 (2)</span>
          </TableRow>
          {sheetTwo.map((f) => <FieldRow key={f[0]} field={f} />)}
        </TreeRows>
        <ScrollThumb />
      </TreeArea>
    </Pane>
    <SwitchRail>
      <SwitchItem><Svg w={14} h={18} sw={1.1}><path d="M.6 3v12c0 3 12.800 3 12.800 0V3" fill="#fff" /><ellipse cx="7" cy="3" rx="6.400" ry="2.400" fill="#fff" /></Svg></SwitchItem>
      <SwitchItem><Svg w={18} h={19} sw={1.1}><path d="M.6 17.500V7.500h5v10zM5.600 17.500V.6h5v16.900zM10.600 5H15v3" fill="#fff" /><path d="M10 9v7.500c0 2 7.500 2 7.500 0V9" fill="#fff" stroke="#d8720c" strokeWidth="1.300" /><ellipse cx="13.750" cy="9" rx="3.750" ry="1.500" fill="#fff" stroke="#d8720c" strokeWidth="1.300" /></Svg></SwitchItem>
      <SwitchItem><Svg w={18} h={19} sw={1.1}><path d="M.6 15.500V7.500h5M5.600 13V.6h5V11M10.600 5h4v2.500" fill="#fff" /><path d="m10 12 6.500-6.500 1.500 1.500-6 7z" fill="#fff" /><path d="M4 18c2-1 2-5 5-5.500l2.500 2C11 18 7.500 19 4 18z" fill={SKY} stroke={BLUE} /></Svg></SwitchItem>
      <AddPane><Svg w={17} stroke="#000" sw={1.1}><path d="M0 8.500h17M8.500 0v17" /></Svg></AddPane>
      <Settings>
        <Svg w={20} sw={1.4}>
          <path d="M8.300 1h3.400l.6 2.900 1.900 1.100 2.800-1 1.700 3-2.200 1.900v2.200l2.200 1.900-1.700 3-2.800-1-1.900 1.100-.6 2.900H8.300l-.6-2.900L5.800 15l-2.800 1-1.700-3 2.200-1.900V8.900L1.300 7 3 4l2.800 1 1.900-1.100z" strokeLinejoin="round" />
          <circle cx="10" cy="10" r="3" />
        </Svg>
      </Settings>
    </SwitchRail>
  </Workspace>
);

/* ---------- Status bar ---------- */

const StatusBar = styled.footer`
  height: 24px;
  background: #f3f2f1;
  border-top: 1px solid #e1dfdd;
  display: flex;
  align-items: center;
  justify-content: space-between;
  padding: 2px 18px 0 4px;
  font-size: 11.6px;
  color: #484644;
`;
const ZoomControls = styled.div`
  display: flex;
  align-items: center;
  svg { margin-top: -2px; }
`;
const ZoomValue = styled.span`
  margin: 0 18px 0 12px;
  width: 25px;
  font-size: 11.3px;
`;
const Status = () => (
  <StatusBar>
    <span>Page 4 of 4</span>
    <ZoomControls>
      <Svg w={124} h={12} stroke="#605e5c" sw={1.1}>
        <path d="M0 6.500h5" strokeWidth="1.600" />
        <path d="M9 6.500h100M59.500 4v5M116 6.500h8M120 2.500v8" />
        <path d="M26 1h4v11h-4z" fill="#484644" stroke="none" />
      </Svg>
      <ZoomValue>43%</ZoomValue>
      <Svg w={16} h={12} stroke="#605e5c"><path d="M.5.5h15v11H.5z" /><path d="M3 4.500V3h2.500M10.500 3H13v1.500M13 7.500V9h-2.500M5.500 9H3V7.500" strokeWidth="1.200" /></Svg>
    </ZoomControls>
  </StatusBar>
);

/* ---------- Taskbar ---------- */

const Taskbar = styled.footer`
  flex: 1;
  border-top: 1px solid #000;
  background: linear-gradient(97deg, #cbe5ec 0%, #cfe5ee 40%, #d3dfec 62%, #d7daea 78%, #d6dfec 100%);
  display: flex;
`;
const StartButton = styled.div`
  width: 48px;
  display: flex;
  align-items: center;
  justify-content: center;
`;
const TaskSearch = styled.div`
  width: 288px;
  background: #fff;
  border: 1px solid #c8c8c8;
  display: flex;
  align-items: center;
  padding-left: 11px;
  gap: 12px;
  font-size: 14.5px;
  letter-spacing: -0.3px;
  color: #2b2b2b;
`;
const TaskViewButton = styled.div`
  width: 50px;
  padding-right: 2px;
  display: flex;
  align-items: center;
  justify-content: center;
`;
const AppList = styled.div`
  display: flex;
  height: 40px;
`;
const AppSlot = styled.div<{ $state?: "open" | "active" }>`
  width: 49px;
  display: flex;
  align-items: center;
  justify-content: center;
  ${(p) => p.$state === "active" && css`
    width: 48px;
    margin-left: 1px;
    background: #edf4fa;
    box-shadow: inset 0 -2px 0 #0078d7;
  `}
  ${(p) => p.$state === "open" && css`background: linear-gradient(#0078d7, #0078d7) center bottom / 40px 2px no-repeat;`}
`;
const Tray = styled.div`
  margin-left: auto;
  display: flex;
  align-items: center;
  font-size: 11.3px;
  color: #111;
`;
const Weather = styled.div`
  display: flex;
  align-items: center;
  gap: 8px;
  width: 85px;
  font-size: 13px;
`;
const TrayIcons = styled.div`
  width: 42px;
  height: 81px;
  margin-left: 9px;
  display: flex;
  flex-wrap: wrap;
  align-content: space-between;
  padding: 12px 0 13px;
  column-gap: 8px;
`;
const Language = styled.div`
  width: 35px;
  line-height: 17px;
  margin-left: 9px;
`;
const Clock = styled.div`
  width: 62px;
  line-height: 21.7px;
  text-align: center;
  letter-spacing: -0.1px;
`;
const Edge = styled.div`
  width: 5px;
  height: 81px;
  margin-left: 20px;
  border-left: 1px solid #a5acb8;
  background: #dfe9f2;
`;

const apps: { icon: React.ReactNode; state?: "open" | "active" }[] = [
  { icon: <Copilot size={25} id="tc" /> },
  { icon: <Svg w={24} h={22} stroke="none"><path d="M0 7 12 0l12 7v15H0z" fill="#0c59a4" /><path d="M3 7h18v8H3z" fill="#f4f4f4" /><path d="m0 7 12 8 12-8v15H0z" fill="#1a9be6" /><path d="m12 15 12-8v15z" fill="#3cc4f2" /></Svg> },
  { icon: <Svg w={24} stroke="none"><path d="M12 12 1.600 6A12 12 0 0 1 22.400 6H12z" fill="#e03c31" /><path d="M1.600 6A12 12 0 0 0 12 24l5.200-9z" fill="#2da04a" /><path d="M22.400 6A12 12 0 0 1 12 24l5.200-9L12 6z" fill="#fbc116" /><circle cx="12" cy="12" r="5.800" fill="#fff" /><circle cx="12" cy="12" r="4.500" fill="#2f7de9" /></Svg> },
  { state: "open", icon: <Svg w={24} stroke="none"><defs><linearGradient id="edge" x1="0" y1="0" x2="1" y2=".3"><stop offset="0" stopColor="#1f9fe0" /><stop offset="1" stopColor="#6ad655" /></linearGradient></defs><circle cx="12" cy="12" r="12" fill="#1268b8" /><path d="M0 11A12 12 0 0 1 24 11c0 4-3 5.500-6 5.500-2.500 0-4-1-4-2 2-3 0-7-5-7C4 7.500 0 9 0 14z" fill="url(#edge)" /><path d="M0 14c0-5 4-6.500 8-6.500-3 2-4.500 8 0 12 3 2.800 6 3 8 3.500C8 26 0 20 0 14z" fill="#1b8fdc" /><path d="M14 14.500c0 2 5 3.500 9 1-2 3-5 4.500-8 4-5-.7-6-6-3.500-8.500 2-.5 3 1 2.500 3.500z" fill="#d3e6ef" /></Svg> },
  { icon: <Svg w={24} stroke="none"><path d="m3 5 9 3v14l-8-3z" fill="#d9a25e" /><path d="m12 8 8-3v14l-8 3z" fill="#b87f42" /><path d="m3 5 8-3 9 3-8 3zM3 5l-2 3 9 3 2-3zM20 5l3 3-8 2.500-3-2.500z" fill="#e5b878" stroke="#b98243" strokeWidth=".6" /><path d="M14 15h8v8h-8z" fill="#f6fafd" /><path d="M18 16.500v4.500M15.800 19l2.200 2.500 2.200-2.500" stroke="#1276c8" strokeWidth="1.600" /></Svg> },
  { icon: <Svg w={24} stroke="none"><path d="M10 6h12.500v12H10z" fill="#fff" stroke="#0f70c4" strokeWidth="1.200" /><path d="m12 8 5 5 5.500-6" stroke="#0f70c4" strokeWidth="1.500" fill="none" /><path d="m1 3 13-2v22L1 21z" fill="#0f70c4" /><ellipse cx="7.500" cy="12" rx="2.900" ry="3.800" stroke="#fff" strokeWidth="2" /></Svg> },
  { icon: <Svg w={22} h={20} stroke="none"><path d="M1 1h8l2 2.500h10V8H1z" fill="#e0a11d" /><path d="M0 5h22v13.500H0z" fill="#fcd462" /><path d="M5 11h13v8h-3v-4H8v4H5z" fill="#3a92dc" /></Svg> },
  { icon: <Svg w={24} stroke="none"><path d="M3 3v10c0 3 12 3 12 0V3z" fill="#f5d42c" /><ellipse cx="9" cy="3.500" rx="6" ry="2.500" fill="#f0a93a" /><path d="M17 1.500h5V6M2 17v5.500h5" stroke="#3f9950" strokeWidth="2.400" fill="none" /><path d="m13 14 8 8M20 14l-8 8.500M11.500 12.500l3 .5M18.500 13l2.500-2M21 14.500l2-1" stroke="#a35fd0" strokeWidth="1.700" fill="none" /></Svg> },
  { state: "active", icon: <Svg w={24} stroke="none"><path d="M0 0h24v24H0z" fill="#0078d7" /><path d="M13 4h6v16h-6z" fill="#e0a410" /><path d="M9 8h6v12H9z" fill="#f4c838" /><path d="M5 12h6v8H5z" fill="#fbe488" /></Svg> },
  { icon: <Svg w={24} stroke="#de3a44" sw={1.2}><ellipse cx="13" cy="8" rx="10.500" ry="6.500" transform="rotate(-15 13 8)" fill="#f0f2f6" /><path d="M5 10c-6 4-5 9 4 8" strokeWidth=".8" /><path d="m13 3 3 13M8 11l11-4M8 7l11 6" stroke="#8a8a90" strokeWidth="1.300" /><circle cx="16" cy="20.500" r="2.400" stroke="#1276c8" strokeWidth="1.600" /><circle cx="20.500" cy="15.500" r="2.400" stroke="#1276c8" strokeWidth="1.600" /></Svg> },
];

const TaskbarArea = () => (
  <Taskbar>
    <StartButton><Svg w={16} stroke="none"><path d="m0 2.200 6.500-.9v6.200H0zM7.300 1.200 16 0v7.500H7.300zM0 8.300h6.500v6.200L0 13.600zM7.300 8.300H16V16l-8.700-1.300z" fill="#000" /></Svg></StartButton>
    <TaskSearch><Magnifier color="#111" />Type here to search</TaskSearch>
    <TaskViewButton>
      <Svg w={16} stroke="#000" sw={1.3}><path d="M.6 5h10.300v6.500H.6zM.6.5v1.700h10.300V.5M.6 15.500v-1.700h10.300v1.700M14.500 0v3M14.500 9v6.500" /><path d="M13 4.500h3v3h-3z" fill="#000" stroke="none" /></Svg>
    </TaskViewButton>
    <AppList>{apps.map((a, i) => <AppSlot key={i} $state={a.state}>{a.icon}</AppSlot>)}</AppList>
    <Tray>
      <Weather>
        <Svg w={22} h={22} stroke="none">
          <defs><linearGradient id="sun" x1="0" y1="0" x2=".6" y2="1"><stop offset="0" stopColor="#fcb535" /><stop offset="1" stopColor="#ee6a10" /></linearGradient></defs>
          <circle cx="10" cy="12" r="10" fill="url(#sun)" />
          <circle cx="16" cy="6" r="6" fill="#c4281c" />
          <text x="16" y="9.300" fontSize="9" textAnchor="middle" fill="#fff">1</text>
        </Svg>
        32°C
      </Weather>
      <Svg w={12} h={7} stroke="#000" sw={1.2}><path d="m.5 6.500 5.500-6 5.500 6" /></Svg>
      <TrayIcons>
        <Svg w={16} h={16} stroke="#000" sw={1.2}><rect x="4" y="4" width="7.500" height="8" rx="1.500" /><path d="m11.500 7 2.500-1.500v5L11.500 9M4.500 1.500C6.500.3 9.500.3 11.500 1.500M4.500 14.500c2 1.200 5 1.200 7 0" /></Svg>
        <Svg w={16} h={16} stroke="#000" sw={1.2}><path d="M7 4.500h7.500v7H4.500V10M15.500 6.500v3M1 4h4v2.500c0 2-4 2-4 0zM2 4V1.500M4 4V1.500M3 8v3.500h3" /></Svg>
        <Svg w={17} h={14} stroke="#000" sw={1.2}><path d="M.6 4.500h2.500L6.500 1v12L3 9.500H.6zM9 4.500c1 1.500 1 3.500 0 5M11.500 3c1.700 2.500 1.700 5.500 0 8M14 1.200c2.500 3.500 2.500 8 0 11.600" /></Svg>
      </TrayIcons>
      <Language>ENG<br />INTL</Language>
      <Clock>7:26 PM<br />Tuesday<br />11/5/2024</Clock>
      <Svg w={34} h={18} stroke="#000" sw={1.3}><path d="M18.600 1.600h15v11h-4.500l-2.600 3-2.600-3h-5.300z" /></Svg>
      <Edge />
    </Tray>
  </Taskbar>
);

export default function App() {
  return (
    <>
      <Global />
      <Screen>
        <Title />
        <Menu />
        <RibbonArea />
        <Work />
        <Status />
        <TaskbarArea />
      </Screen>
    </>
  );
}
